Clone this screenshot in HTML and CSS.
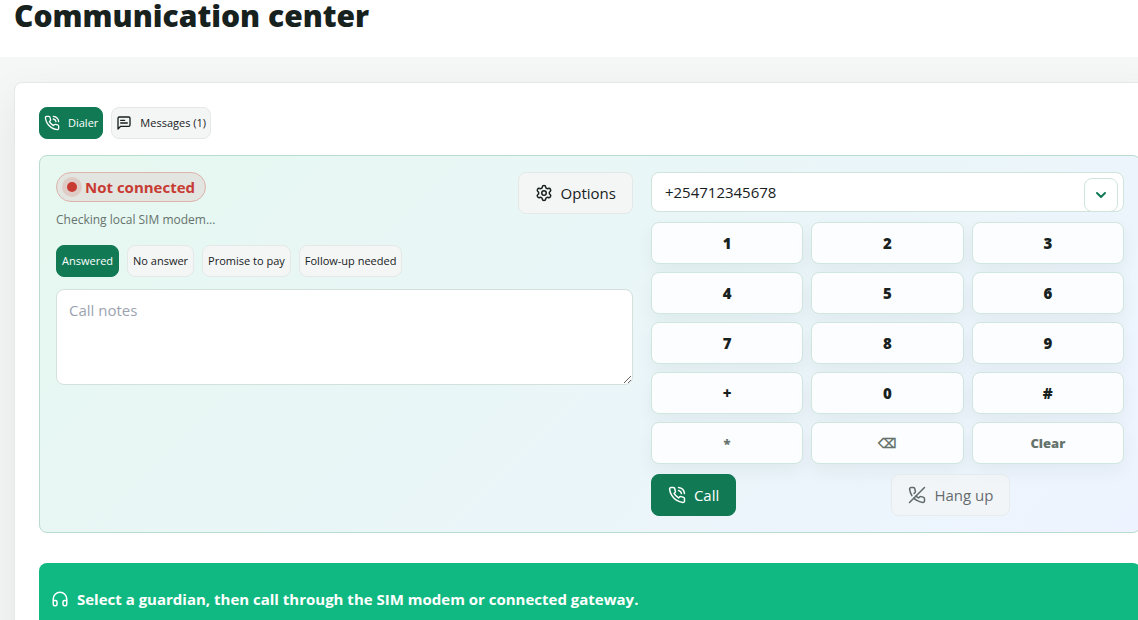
FILE: index.html
```html
<!DOCTYPE html>
<html lang="en">
<head>
    <meta charset="UTF-8">
    <meta name="viewport" content="width=device-width, initial-scale=1.0">
    <title>Communication center</title>
    <link rel="stylesheet" href="styles.css">
</head>
<body>
    <svg class="sprite" aria-hidden="true">
        <symbol id="phone" viewBox="0 0 24 24">
            <path d="M22 16.92v3a2 2 0 0 1-2.18 2 19.79 19.79 0 0 1-8.63-3.07 19.5 19.5 0 0 1-6-6 19.79 19.79 0 0 1-3.07-8.67A2 2 0 0 1 4.11 2h3a2 2 0 0 1 2 1.72 12.84 12.84 0 0 0 .7 2.81 2 2 0 0 1-.45 2.11L8.09 9.91a16 16 0 0 0 6 6l1.27-1.27a2 2 0 0 1 2.11-.45 12.84 12.84 0 0 0 2.81.7A2 2 0 0 1 22 16.92z"/>
            <path d="M14 2a9 9 0 0 1 8 7.94"/>
            <path d="M14 6a5 5 0 0 1 4 4"/>
        </symbol>
    </svg>

    <header class="page-header">
        <h1>Communication center</h1>
    </header>

    <main class="content">
        <section class="card">
            <nav class="tabs">
                <button type="button" class="chip active">
                    <svg class="icon"><use href="#phone"/></svg>
                    Dialer
                </button>
                <button type="button" class="chip">
                    <svg class="icon" viewBox="0 0 24 24">
                        <path d="M21 15a2 2 0 0 1-2 2H7l-4 4V5a2 2 0 0 1 2-2h14a2 2 0 0 1 2 2z"/>
                        <path d="M13 8H7"/>
                        <path d="M17 12H7"/>
                    </svg>
                    Messages (1)
                </button>
            </nav>

            <div class="dialer">
                <div class="call-info">
                    <div class="status-row">
                        <div class="status">
                            <span class="badge"><span class="dot"></span>Not connected</span>
                            <p class="hint">Checking local SIM modem...</p>
                        </div>
                        <button type="button" class="btn">
                            <svg class="icon" viewBox="0 0 24 24">
                                <path d="M9.671 4.136a2.34 2.34 0 0 1 4.659 0 2.34 2.34 0 0 0 3.319 1.915 2.34 2.34 0 0 1 2.33 4.033 2.34 2.34 0 0 0 0 3.831 2.34 2.34 0 0 1-2.33 4.033 2.34 2.34 0 0 0-3.319 1.915 2.34 2.34 0 0 1-4.659 0 2.34 2.34 0 0 0-3.32-1.915 2.34 2.34 0 0 1-2.33-4.033 2.34 2.34 0 0 0 0-3.831A2.34 2.34 0 0 1 6.35 6.051a2.34 2.34 0 0 0 3.319-1.915"/>
                                <circle cx="12" cy="12" r="3"/>
                            </svg>
                            Options
                        </button>
                    </div>
                    <div class="outcomes">
                        <button type="button" class="chip active">Answered</button>
                        <button type="button" class="chip">No answer</button>
                        <button type="button" class="chip">Promise to pay</button>
                        <button type="button" class="chip">Follow-up needed</button>
                    </div>
                    <textarea class="notes" placeholder="Call notes" aria-label="Call notes"></textarea>
                </div>

                <div class="keypad">
                    <div class="number">
                        <input type="tel" value="+254712345678" aria-label="Phone number">
                        <button type="button" class="toggle" aria-label="Show numbers">
                            <svg class="icon" viewBox="0 0 24 24"><path d="m6 9 6 6 6-6"/></svg>
                        </button>
                    </div>
                    <div class="keys">
                        <button type="button">1</button>
                        <button type="button">2</button>
                        <button type="button">3</button>
                        <button type="button">4</button>
                        <button type="button">5</button>
                        <button type="button">6</button>
                        <button type="button">7</button>
                        <button type="button">8</button>
                        <button type="button">9</button>
                        <button type="button">+</button>
                        <button type="button">0</button>
                        <button type="button">#</button>
                        <button type="button" class="muted">*</button>
                        <button type="button" class="muted" aria-label="Backspace">⌫</button>
                        <button type="button" class="muted">Clear</button>
                    </div>
                    <div class="actions">
                        <button type="button" class="btn primary">
                            <svg class="icon"><use href="#phone"/></svg>
                            Call
                        </button>
                        <button type="button" class="btn" disabled>
                            <svg class="icon" viewBox="0 0 24 24">
                                <path d="M10.68 13.31a16 16 0 0 0 3.41 2.6l1.27-1.27a2 2 0 0 1 2.11-.45 12.84 12.84 0 0 0 2.81.7 2 2 0 0 1 1.72 2v3a2 2 0 0 1-2.18 2 19.79 19.79 0 0 1-8.63-3.07 19.42 19.42 0 0 1-3.33-2.67"/>
                                <path d="M5.19 12.81a19.79 19.79 0 0 1-3.07-8.63A2 2 0 0 1 4.11 2h3a2 2 0 0 1 2 1.72 12.84 12.84 0 0 0 .7 2.81 2 2 0 0 1-.45 2.11L8.09 9.91"/>
                                <path d="M22 2 2 22"/>
                            </svg>
                            Hang up
                        </button>
                    </div>
                </div>
            </div>

            <div class="banner">
                <svg class="icon" viewBox="0 0 24 24">
                    <path d="M3 14h3a2 2 0 0 1 2 2v3a2 2 0 0 1-2 2H5a2 2 0 0 1-2-2v-7a9 9 0 0 1 18 0v7a2 2 0 0 1-2 2h-1a2 2 0 0 1-2-2v-3a2 2 0 0 1 2-2h3"/>
                </svg>
                <strong>Select a guardian, then call through the SIM modem or connected gateway.</strong>
            </div>
        </section>
    </main>
</body>
</html>
```
FILE: styles.css
```css
* {
    box-sizing: border-box;
}

body {
    margin: 0;
    height: 100vh;
    overflow: hidden;
    font-family: "Open Sans", "Noto Sans", sans-serif;
    font-size: 15px;
    line-height: 24px;
    color: #17211d;
    background-color: #f5f6f6;
}

button,
input,
textarea {
    font: inherit;
    color: inherit;
}

button {
    cursor: pointer;
}

.sprite {
    display: none;
}

.icon {
    width: 18px;
    height: 18px;
    flex: none;
    fill: none;
    stroke: currentColor;
    stroke-width: 2;
    stroke-linecap: round;
    stroke-linejoin: round;
}

.page-header {
    padding: 0 14px 25px;
    background-color: #fff;
}

h1 {
    margin: 0;
    font-size: 30px;
    line-height: 32px;
    font-weight: 900;
}

.content {
    padding: 25px 0 0 14px;
}

/* the card runs past the right edge of the window */
.card {
    margin-right: -28px;
    padding: 24px;
    background-color: #fff;
    border: 1px solid #e2e9e6;
    border-radius: 8px;
    box-shadow: 0 16px 40px rgba(23, 33, 29, 0.08);
}

.tabs,
.outcomes {
    display: flex;
    gap: 8px;
}

.chip {
    display: flex;
    align-items: center;
    gap: 8px;
    height: 32px;
    padding: 0 5px;
    font-size: 11px;
    background-color: #f4f6f5;
    border: 1px solid #e4e9e7;
    border-radius: 8px;
}

.chip .icon {
    width: 16px;
    height: 16px;
}

.chip.active {
    color: #fff;
    background-color: #117a55;
    border-color: #117a55;
}

.tabs .chip {
    padding: 0 4px;
}

.dialer {
    display: grid;
    grid-template-columns: 1fr 0.82fr;
    gap: 18px;
    margin-top: 16px;
    padding: 16px;
    border: 1px solid #b9dccf;
    border-radius: 8px;
    background: linear-gradient(135deg, #e6f8f0, #e9f6f7 45%, #eef4ff);
}

.status-row {
    display: flex;
    justify-content: space-between;
    align-items: flex-start;
}

.badge {
    display: flex;
    align-items: center;
    gap: 8px;
    width: fit-content;
    height: 30px;
    padding: 0 10px;
    font-weight: 700;
    color: #c73b33;
    background-color: #e3e5e0;
    border: 1px solid #dfb2ac;
    border-radius: 15px;
}

.dot {
    width: 10px;
    height: 10px;
    border-radius: 50%;
    background-color: #c73b33;
    box-shadow: 0 0 0 5px rgba(199, 59, 51, 0.14);
}

.hint {
    margin: 8px 0 0;
    font-size: 12px;
    line-height: 20px;
    color: #66736d;
}

.btn {
    display: flex;
    align-items: center;
    gap: 8px;
    height: 42px;
    padding: 0 16px;
    background-color: #f4f6f5;
    border: 1px solid #e4e9e7;
    border-radius: 8px;
}

.btn.primary {
    color: #fff;
    background-color: #117a55;
    border-color: #117a55;
}

.btn:disabled {
    color: inherit;
    opacity: 0.65;
    cursor: default;
}

.outcomes {
    margin-top: 15px;
}

.notes {
    display: block;
    width: 100%;
    height: 96px;
    margin-top: 12px;
    padding: 8px 12px;
    background-color: #fff;
    border: 1px solid #d3e0db;
    border-radius: 8px;
    resize: vertical;
}

.notes::placeholder {
    color: #9ca3af;
}

.keypad {
    display: grid;
    gap: 10px;
}

.number {
    position: relative;
}

.number input {
    display: block;
    width: 100%;
    height: 40px;
    padding: 0 48px 0 13px;
    background-color: #fff;
    border: 1px solid #d0e4dc;
    border-radius: 8px;
}

.toggle {
    position: absolute;
    right: 6px;
    bottom: 0;
    display: grid;
    place-items: center;
    width: 34px;
    height: 34px;
    padding: 0;
    color: #117a55;
    background-color: #fff;
    border: 1px solid #d0e4dc;
    border-radius: 8px;
}

.toggle .icon {
    width: 16px;
    height: 16px;
    stroke-width: 3;
}

.keys {
    display: grid;
    grid-template-columns: repeat(3, 1fr);
    gap: 8px;
}

.keys button {
    height: 42px;
    padding: 0;
    font-weight: 900;
    background-color: #fcfdfe;
    border: 1px solid #d0e6de;
    border-radius: 8px;
    box-shadow: 0 8px 18px rgba(23, 33, 29, 0.05);
}

.keys .muted {
    font-size: 13px;
    color: #66736d;
}

.actions {
    display: grid;
    grid-template-columns: 1fr 1fr;
    gap: 8px;
    justify-items: start;
}

.banner {
    display: flex;
    align-items: center;
    gap: 8px;
    margin-top: 30px;
    padding: 24px 12px;
    color: #fff;
    background-color: #10b981;
    border-radius: 8px;
}
```
